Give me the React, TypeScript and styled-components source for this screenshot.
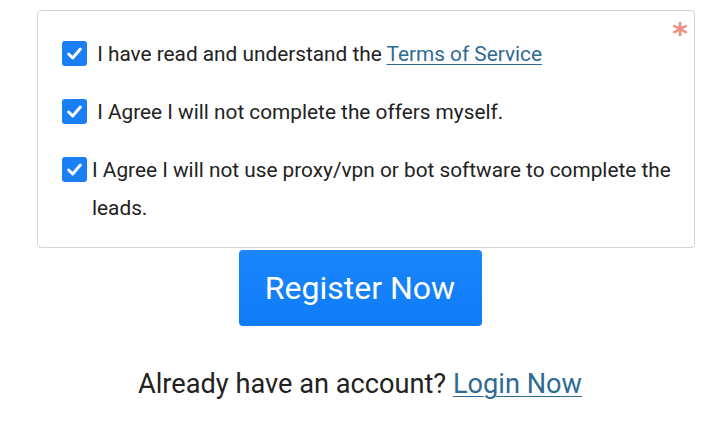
import React from "react";
import styled, { createGlobalStyle } from "styled-components";

const Global = createGlobalStyle`
  html, body { margin: 0; padding: 0; background: #ffffff; }
  body { font-family: Roboto, "Noto Sans", Arial, sans-serif; color: #222222; }
`;

const Page = styled.div`
  width: 720px;
  padding-top: 10px;
  display: flex;
  flex-direction: column;
  align-items: center;
`;

const TermsBox = styled.div`
  position: relative;
  box-sizing: border-box;
  width: 658px;
  margin-left: 12px;
  border: 1px solid #d4d4d4;
  border-radius: 4px;
  padding: 24px 10px 20px 54px;
  display: flex;
  flex-direction: column;
  gap: 20px;
`;

const Required = styled.span`
  position: absolute;
  top: 8px;
  right: 6px;
  color: #f28b82;
  font-size: 30px;
  font-weight: bold;
  line-height: 30px;
  font-family: "DejaVu Sans", sans-serif;
`;

const CheckRow = styled.label`
  position: relative;
  display: block;
  font-size: 20.8px;
  line-height: 38px;
  color: #222222;
`;

const Box = styled.span`
  position: absolute;
  left: -30px;
  top: 6px;
  width: 25px;
  height: 25px;
  border-radius: 3px;
  background: #1a7ef5;
  display: flex;
  align-items: center;
  justify-content: center;
`;

const Link = styled.a`
  color: #2e6b92;
  text-decoration: underline;
  text-underline-offset: 3px;
  text-decoration-thickness: 1px;
`;

const RegisterButton = styled.button`
  margin-top: 2px;
  width: 243px;
  height: 76px;
  border: none;
  border-radius: 4px;
  background: linear-gradient(#1a85fc, #0f7cf8);
  color: #ffffff;
  font-family: Roboto, sans-serif;
  font-size: 32px;
`;

const Footer = styled.p`
  margin: 42px 0 0;
  font-size: 27.2px;
  line-height: 32px;
  color: #222222;
`;

const Check = () => (
  <Box>
    <svg width="17" height="17" viewBox="0 0 16 16">
      <path d="M2.5 8.5 L6.3 12.2 L13.5 3.8" fill="none" stroke="#fff" strokeWidth="2.8" strokeLinecap="round" strokeLinejoin="round" />
    </svg>
  </Box>
);

export default function App() {
  return (
    <>
      <Global />
      <Page>
        <TermsBox>
          <Required>*</Required>
          <CheckRow>
            <Check />&nbsp;I have read and understand the <Link href="#">Terms of Service</Link>
          </CheckRow>
          <CheckRow>
            <Check />&nbsp;I Agree I will not complete the offers myself.
          </CheckRow>
          <CheckRow>
            <Check />I Agree I will not use proxy/vpn or bot software to complete the leads.
          </CheckRow>
        </TermsBox>
        <RegisterButton>Register Now</RegisterButton>
        <Footer>
          Already have an account? <Link href="#">Login Now</Link>
        </Footer>
      </Page>
    </>
  );
}
